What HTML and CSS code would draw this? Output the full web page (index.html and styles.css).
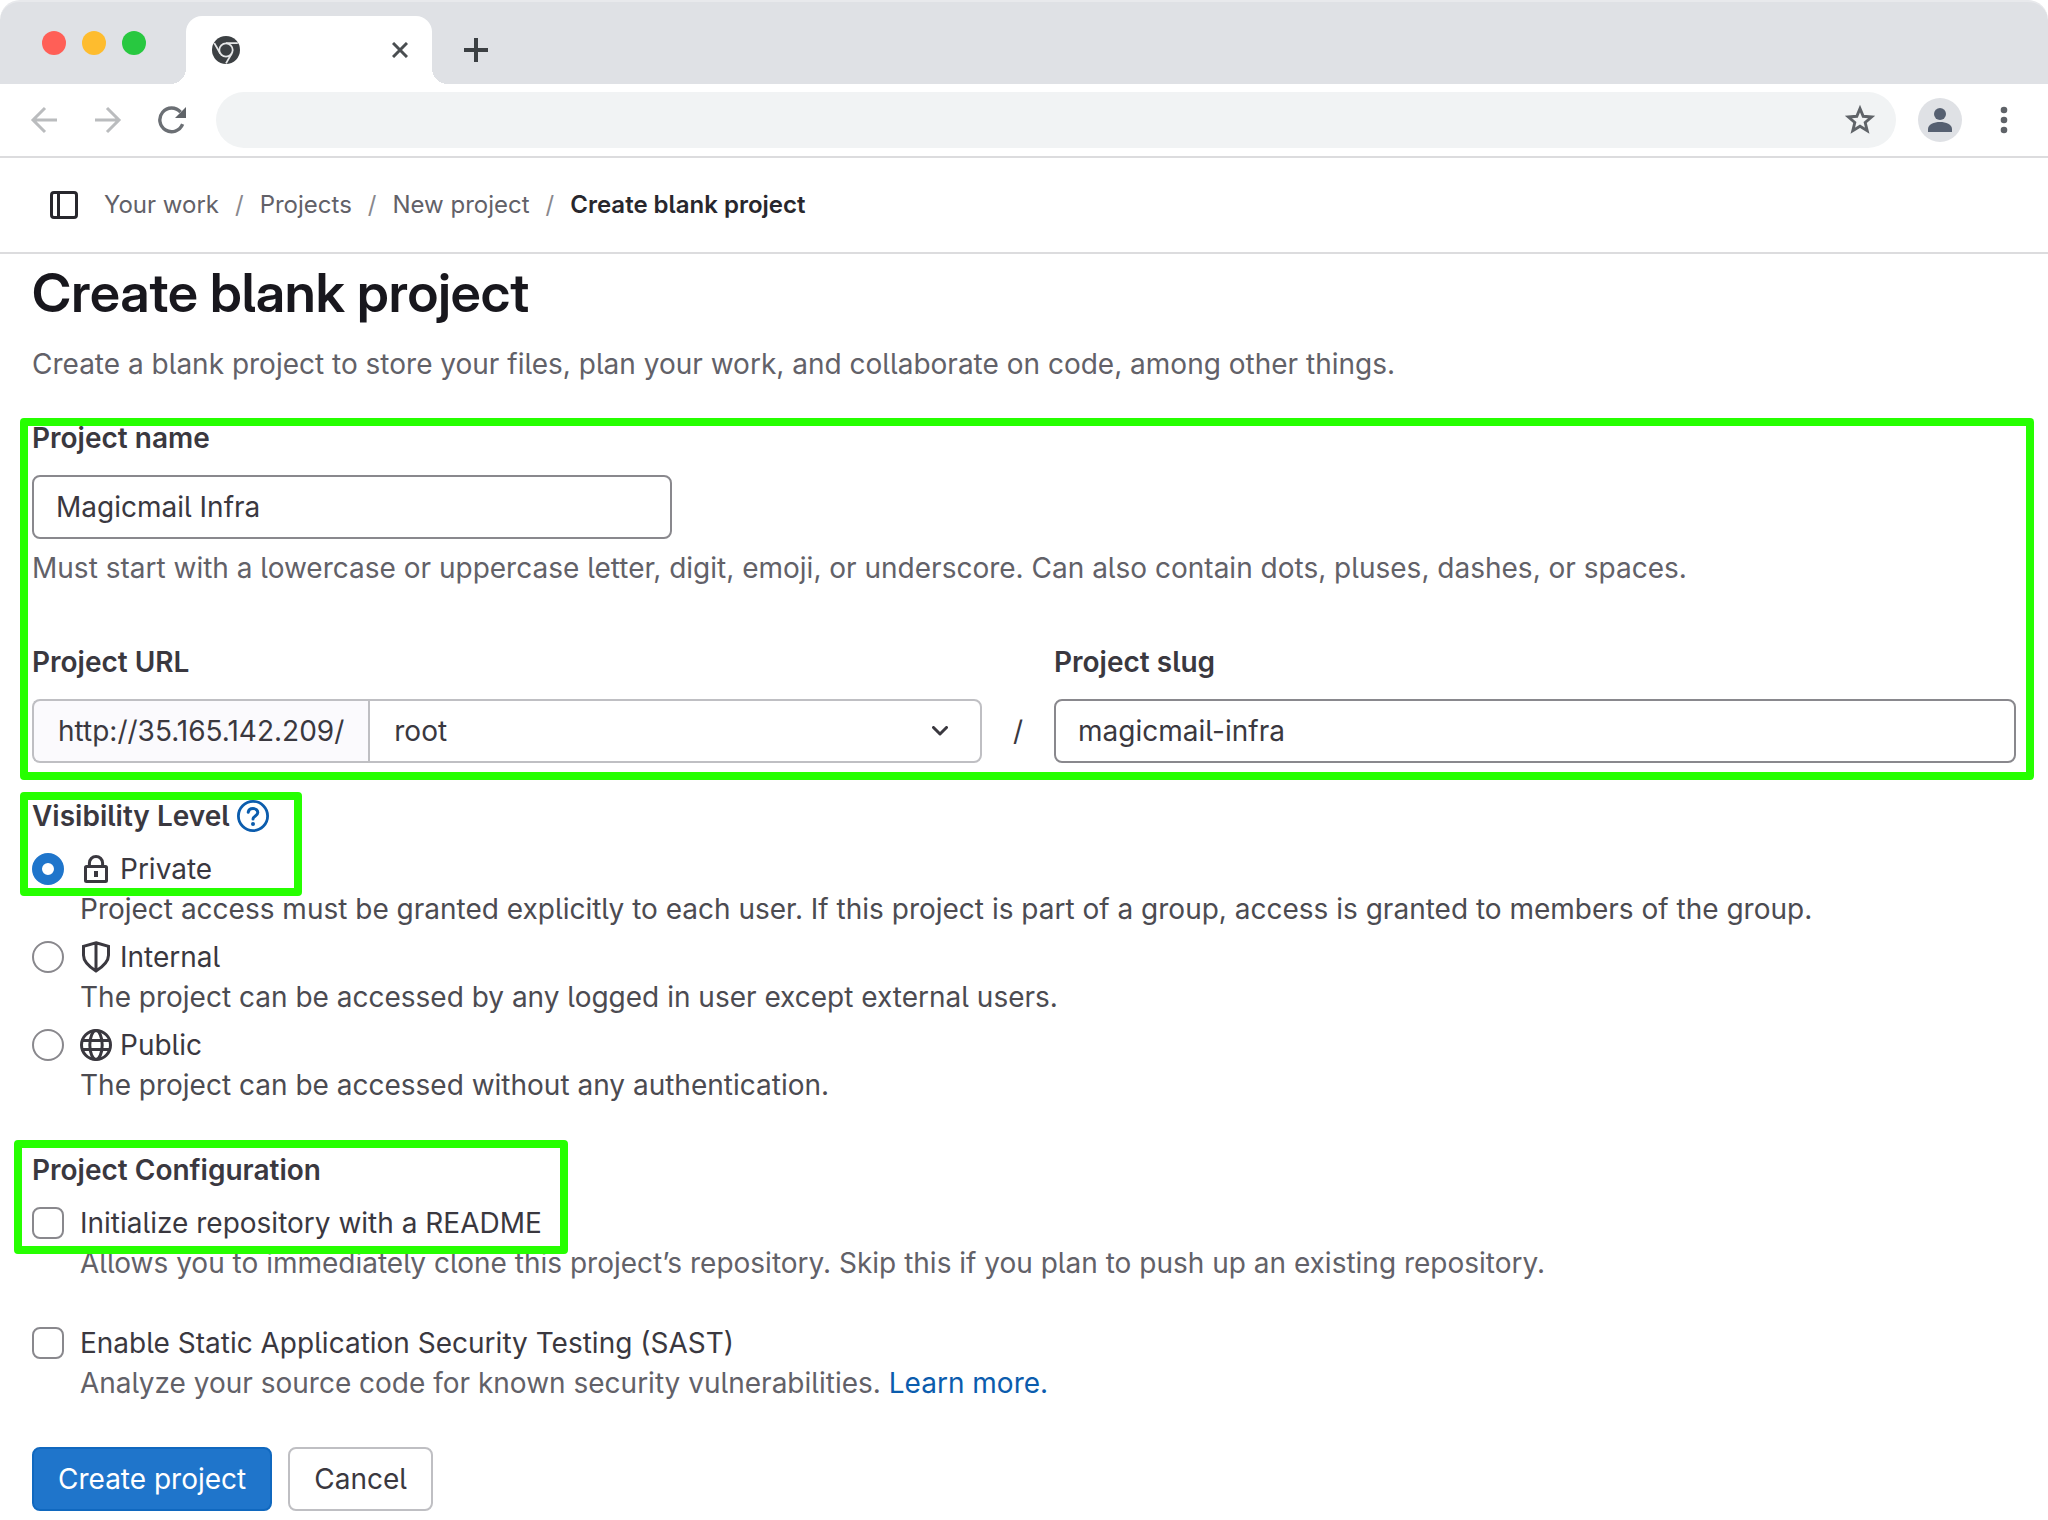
FILE: index.html
```html
<!DOCTYPE html>
<html lang="en">
<head>
  <meta charset="utf-8">
  <meta name="viewport" content="width=device-width, initial-scale=1">
  <title>Create blank project</title>
  <link rel="stylesheet" href="styles.css">
</head>
<body>
  <header class="browser">
    <div class="tabstrip">
      <div class="lights">
        <span class="light light-close"></span>
        <span class="light light-minimize"></span>
        <span class="light light-zoom"></span>
      </div>
      <div class="tab">
        <svg class="icon-28" viewBox="0 0 28 28" aria-hidden="true">
          <circle cx="14" cy="14" r="14" fill="#3c4043"/>
          <circle cx="14" cy="14" r="7.600" fill="#e6e7e8"/>
          <path d="M14 7.100H25.800M8.300 17.500L2.300 7.100M19.700 17.500L14 27.400" stroke="#e6e7e8" stroke-width="1.800" fill="none"/>
          <circle cx="14" cy="14" r="5.800" fill="#3c4043"/>
        </svg>
        <button class="chrome-button" type="button" aria-label="Close tab">
          <svg class="icon-16" viewBox="0 0 16 16" aria-hidden="true"><path d="M1 1l14 14M15 1L1 15" stroke="#4a4e51" stroke-width="3" fill="none"/></svg>
        </button>
      </div>
      <button class="chrome-button new-tab" type="button" aria-label="New tab">
        <svg class="icon-24" viewBox="0 0 24 24" aria-hidden="true"><path d="M12 0v24M0 12h24" stroke="#3c4043" stroke-width="4" fill="none"/></svg>
      </button>
    </div>
    <div class="toolbar">
      <div class="nav-buttons">
        <button class="chrome-button" type="button" aria-label="Back">
          <svg class="icon-28" viewBox="0 0 28 28" aria-hidden="true"><path d="M27 14H3M15 2L3 14l12 12" stroke="#babcbe" stroke-width="3" fill="none"/></svg>
        </button>
        <button class="chrome-button" type="button" aria-label="Forward">
          <svg class="icon-28" viewBox="0 0 28 28" aria-hidden="true"><path d="M1 14h24M13 2l12 12-12 12" stroke="#babcbe" stroke-width="3" fill="none"/></svg>
        </button>
        <button class="chrome-button" type="button" aria-label="Reload">
          <svg class="icon-28" viewBox="0 0 28 28" aria-hidden="true"><path d="M24.6 18.2A11.8 11.8 0 1 1 22.6 6.2" stroke="#6b6f74" stroke-width="3.4" fill="none"/><path d="M28 1v11H17z" fill="#5f6368"/></svg>
        </button>
      </div>
      <div class="omnibox">
        <input class="address" type="text" aria-label="Address">
        <button class="chrome-button" type="button" aria-label="Bookmark">
          <svg class="icon-32" viewBox="0 0 32 32" aria-hidden="true"><path d="M16 4.5l3.2 7.8 8.4.7-6.4 5.5 2 8.2-7.2-4.400-7.200 4.400 2-8.200-6.400-5.500 8.400-.7z" stroke="#5f6368" stroke-width="2.900" fill="none"/></svg>
        </button>
      </div>
      <div class="menu-buttons">
        <button class="chrome-button" type="button" aria-label="Profile">
          <svg class="icon-44" viewBox="0 0 44 44" aria-hidden="true"><circle cx="22" cy="22" r="22" fill="#dfe1e5"/><circle cx="22" cy="16" r="6" fill="#566071"/><path d="M10 34v-3c0-4.500 6-7 12-7s12 2.500 12 7v3z" fill="#566071"/></svg>
        </button>
        <button class="chrome-button" type="button" aria-label="Menu">
          <svg class="icon-28" viewBox="0 0 28 28" aria-hidden="true"><g fill="#5f6368"><circle cx="14" cy="4" r="3.300"/><circle cx="14" cy="14" r="3.300"/><circle cx="14" cy="24" r="3.300"/></g></svg>
        </button>
      </div>
    </div>
  </header>

  <nav class="topbar" aria-label="Breadcrumb">
    <button class="chrome-button" type="button" aria-label="Toggle sidebar">
      <svg class="icon-28" viewBox="0 0 28 28" aria-hidden="true"><rect x="1.500" y="1.500" width="25" height="25" rx="2.500" stroke="#28272d" stroke-width="3" fill="none"/><path d="M8.500 1v26" stroke="#28272d" stroke-width="3"/></svg>
    </button>
    <ol class="crumbs">
      <li><a href="#">Your work</a></li>
      <li><a href="#">Projects</a></li>
      <li><a href="#">New project</a></li>
      <li><a class="current" href="#" aria-current="page">Create blank project</a></li>
    </ol>
  </nav>

  <main class="page">
    <h1 class="title">Create blank project</h1>
    <p class="intro">Create a blank project to store your files, plan your work, and collaborate on code, among other things.</p>

    <form class="form">
      <div class="marked">
        <span class="mark mark-fields"></span>
        <div class="field">
          <label class="label" for="name">Project name</label>
          <input class="input name" id="name" type="text" value="Magicmail Infra">
          <p class="help">Must start with a lowercase or uppercase letter, digit, emoji, or underscore. Can also contain dots, pluses, dashes, or spaces.</p>
        </div>
        <div class="url-row">
          <div class="field">
            <label class="label" for="namespace">Project URL</label>
            <div class="input-group">
              <span class="prepend">http://35.165.142.209/</span>
              <select class="select" id="namespace"><option>root</option></select>
              <svg class="chevron" viewBox="0 0 16 10" aria-hidden="true"><path d="M1.500 1.500L8 8l6.500-6.500" stroke="#3a383f" stroke-width="3" stroke-linecap="round" stroke-linejoin="round" fill="none"/></svg>
            </div>
          </div>
          <span class="slash">/</span>
          <div class="field">
            <label class="label" for="slug">Project slug</label>
            <input class="input" id="slug" type="text" value="magicmail-infra">
          </div>
        </div>
      </div>

      <fieldset class="group visibility">
        <div class="marked group-head">
          <span class="mark mark-visibility"></span>
          <legend class="label legend">Visibility Level
            <a class="help-link" href="#" aria-label="Visibility help"><svg class="icon-32" viewBox="0 0 16 16" aria-hidden="true"><circle cx="8" cy="8" r="7.300" stroke="#0b5cad" stroke-width="1.400" fill="none"/><path d="M5.600 6.100C5.800 4.900 6.700 4.300 8 4.300c1.400 0 2.400.8 2.400 2 0 1.600-2.400 1.700-2.400 3.200" stroke="#0b5cad" stroke-width="1.500" stroke-linecap="round" fill="none"/><circle cx="8" cy="12" r="1" fill="#0b5cad"/></svg></a>
          </legend>
          <div class="choice">
            <input class="radio" id="private" type="radio" name="visibility" checked>
            <label class="choice-label" for="private">
              <svg class="icon-32" viewBox="0 0 16 16" aria-hidden="true"><g stroke="#3a383f" stroke-width="1.500" fill="none"><rect x="2.750" y="6.750" width="10.500" height="7.500" rx=".5"/><path d="M4.700 6.500V5a3.300 3.300 0 0 1 6.600 0v1.500"/></g><path d="M7 9h2v3H7z" fill="#3a383f"/></svg>
              Private
            </label>
          </div>
        </div>
        <p class="choice-help">Project access must be granted explicitly to each user. If this project is part of a group, access is granted to members of the group.</p>
        <div class="choice">
          <input class="radio" id="internal" type="radio" name="visibility">
          <label class="choice-label" for="internal">
            <svg class="icon-32" viewBox="0 0 16 16" aria-hidden="true"><path d="M8 .9l6.250 1.800v4.400c0 3.300-2.450 5.500-6.250 7.900-3.800-2.400-6.250-4.600-6.250-7.900V2.700zM8 1v13.800" stroke="#3a383f" stroke-width="1.500" fill="none"/></svg>
            Internal
          </label>
        </div>
        <p class="choice-help">The project can be accessed by any logged in user except external users.</p>
        <div class="choice">
          <input class="radio" id="public" type="radio" name="visibility">
          <label class="choice-label" for="public">
            <svg class="icon-32" viewBox="0 0 16 16" aria-hidden="true"><g stroke="#3a383f" stroke-width="1.500" fill="none"><circle cx="8" cy="8" r="7.250"/><ellipse cx="8" cy="8" rx="3.100" ry="7.200"/><path d="M1.200 5.750h13.600M1.200 10.250h13.600"/></g></svg>
            Public
          </label>
        </div>
        <p class="choice-help">The project can be accessed without any authentication.</p>
      </fieldset>

      <fieldset class="group configuration">
        <div class="marked group-head">
          <span class="mark mark-configuration"></span>
          <legend class="label legend">Project Configuration</legend>
          <div class="choice">
            <input class="checkbox" id="readme" type="checkbox">
            <label class="choice-label" for="readme">Initialize repository with a README</label>
          </div>
        </div>
        <p class="choice-help subtle">Allows you to immediately clone this project’s repository. Skip this if you plan to push up an existing repository.</p>
        <div class="choice">
          <input class="checkbox" id="sast" type="checkbox">
          <label class="choice-label" for="sast">Enable Static Application Security Testing (SAST)</label>
        </div>
        <p class="choice-help subtle">Analyze your source code for known security vulnerabilities. <a class="link" href="#">Learn more.</a></p>
      </fieldset>

      <div class="actions">
        <button class="button primary" type="submit">Create project</button>
        <button class="button" type="button">Cancel</button>
      </div>
    </form>
  </main>
</body>
</html>
```

FILE: styles.css
```css
*,
*::before,
*::after {
  box-sizing: border-box;
}

body {
  margin: 0;
  background: #fff;
  color: #3a383f;
  font-family: Inter, "Liberation Sans", sans-serif;
  font-feature-settings: "cv05";
  font-size: 28px;
  line-height: 40px;
}

input,
select,
button {
  font: inherit;
  font-feature-settings: inherit;
  color: inherit;
  margin: 0;
}

h1,
p,
ol {
  margin: 0;
  padding: 0;
}

svg {
  display: block;
  flex: none;
}

.icon-16 { width: 16px; height: 16px; }
.icon-24 { width: 24px; height: 24px; }
.icon-28 { width: 28px; height: 28px; }
.icon-32 { width: 32px; height: 32px; }
.icon-44 { width: 44px; height: 44px; }

/* Browser window */

.tabstrip {
  display: flex;
  align-items: flex-end;
  height: 84px;
  background: #dfe1e5;
  border-top: 2px solid #e8e9ec;
  border-radius: 20px 20px 0 0;
}

.lights {
  display: flex;
  gap: 16px;
  width: 186px;
  padding: 0 0 29px 42px;
}

.light {
  width: 24px;
  height: 24px;
  border-radius: 50%;
}

.light-close { background: #ff5f57; }
.light-minimize { background: #febc2e; }
.light-zoom { background: #28c840; }

.tab {
  position: relative;
  display: flex;
  align-items: center;
  justify-content: space-between;
  width: 246px;
  height: 68px;
  padding: 0 24px 0 26px;
  background: #fff;
  border-radius: 16px 16px 0 0;
}

.tab::before,
.tab::after {
  content: "";
  position: absolute;
  bottom: 0;
  width: 16px;
  height: 16px;
}

.tab::before {
  right: 100%;
  background: radial-gradient(circle at 0 0, transparent 16px, #fff 16px);
}

.tab::after {
  left: 100%;
  background: radial-gradient(circle at 100% 0, transparent 16px, #fff 16px);
}

.chrome-button {
  display: flex;
  padding: 0;
  border: 0;
  background: none;
}

.new-tab {
  margin: 0 0 22px 32px;
}

.toolbar {
  display: flex;
  align-items: center;
  gap: 22px;
  height: 74px;
  padding: 0 30px;
  border-bottom: 2px solid #dcdcde;
}

.nav-buttons {
  display: flex;
  gap: 36px;
  width: 164px;
}

.menu-buttons {
  display: flex;
  align-items: center;
  gap: 28px;
}

.omnibox {
  display: flex;
  align-items: center;
  flex: 1;
  height: 56px;
  padding: 0 20px 0 28px;
  background: #f1f3f4;
  border-radius: 28px;
}

.address {
  flex: 1;
  min-width: 0;
  border: 0;
  background: none;
  outline: 0;
}

/* Breadcrumb bar */

.topbar {
  display: flex;
  align-items: center;
  gap: 26px;
  height: 96px;
  padding: 0 50px;
  border-bottom: 2px solid #dcdcde;
  font-size: 24px;
}

.crumbs {
  display: flex;
  list-style: none;
}

.crumbs li + li::before {
  content: "/";
  padding: 0 16px;
  color: #89888d;
}

.crumbs a {
  color: #626168;
  text-decoration: none;
}

.crumbs .current {
  color: #28272d;
  font-weight: 600;
}

/* Page */

.page {
  padding: 4px 32px 8px;
}

.title {
  color: #18171d;
  font-family: "Inter Display", Inter, "Liberation Sans", sans-serif;
  font-size: 54px;
  font-variation-settings: "opsz" 32;
  font-weight: 600;
  line-height: 70px;
}

.intro {
  margin-top: 16px;
  color: #626168;
}

.form {
  margin-top: 34px;
}

.field {
  display: flex;
  flex-direction: column;
  min-width: 0;
}

.label {
  font-weight: 600;
  margin-bottom: 17px;
}

.input {
  width: 100%;
  height: 64px;
  padding: 0 22px;
  border: 2px solid #89888d;
  border-radius: 8px;
  background: #fff;
}

.name {
  max-width: 640px;
}

.help {
  margin-top: 9px;
  color: #626168;
}

.url-row {
  display: grid;
  grid-template-columns: calc(50% - 42px) 72px 1fr;
  align-items: end;
  margin-top: 54px;
}

.slash {
  height: 52px;
  text-align: center;
}

.input-group {
  display: flex;
  position: relative;
}

.prepend {
  padding: 10px 24px;
  border: 2px solid #bfbfc3;
  border-right: 0;
  border-radius: 8px 0 0 8px;
  background: #fbfafd;
}

.select {
  flex: 1;
  min-width: 0;
  height: 64px;
  padding: 0 64px 0 24px;
  border: 2px solid #bfbfc3;
  border-radius: 0 8px 8px 0;
  background: #fff;
  appearance: none;
}

.chevron {
  position: absolute;
  top: 27px;
  right: 34px;
  width: 16px;
  height: 10px;
  pointer-events: none;
}

.group {
  min-width: 0;
  margin: 0;
  padding: 0;
  border: 0;
}

.visibility {
  margin-top: 33px;
}

.configuration {
  margin-top: 45px;
}

.legend {
  display: flex;
  align-items: center;
  gap: 7px;
  margin-bottom: 13px;
  padding: 0;
}

.choice {
  display: flex;
  align-items: center;
  gap: 16px;
}

.choice-label {
  display: flex;
  align-items: center;
  gap: 8px;
}

.choice-help {
  padding-left: 48px;
  color: #4c4b51;
}

.choice-help + .choice {
  margin-top: 8px;
}

.configuration .choice-help + .choice {
  margin-top: 40px;
}

.subtle {
  color: #626168;
}

.radio,
.checkbox {
  flex: none;
  width: 32px;
  height: 32px;
  border: 2px solid #89888d;
  background: #fff;
  appearance: none;
}

.radio {
  border-radius: 50%;
}

.radio:checked {
  border: 10px solid #1f75cb;
}

.checkbox {
  border-radius: 8px;
}

.link {
  color: #0b5cad;
  text-decoration: none;
}

.actions {
  display: flex;
  gap: 16px;
  margin-top: 44px;
}

.button {
  height: 64px;
  padding: 0 24px;
  border: 2px solid #bfbfc3;
  border-radius: 8px;
  background: #fff;
}

.primary {
  border-color: #1068bf;
  background: #1f75cb;
  color: #fff;
}

/* Highlight frames laid over the form */

.marked {
  position: relative;
}

.mark {
  position: absolute;
  z-index: 1;
  border: 8px solid #26ff00;
  border-radius: 4px;
  pointer-events: none;
}

.mark-fields {
  inset: 0 -18px -17px -12px;
}

.mark-visibility {
  inset: -4px auto -7px -12px;
  width: 282px;
}

.mark-configuration {
  inset: -10px auto -11px -18px;
  width: 554px;
}
```
